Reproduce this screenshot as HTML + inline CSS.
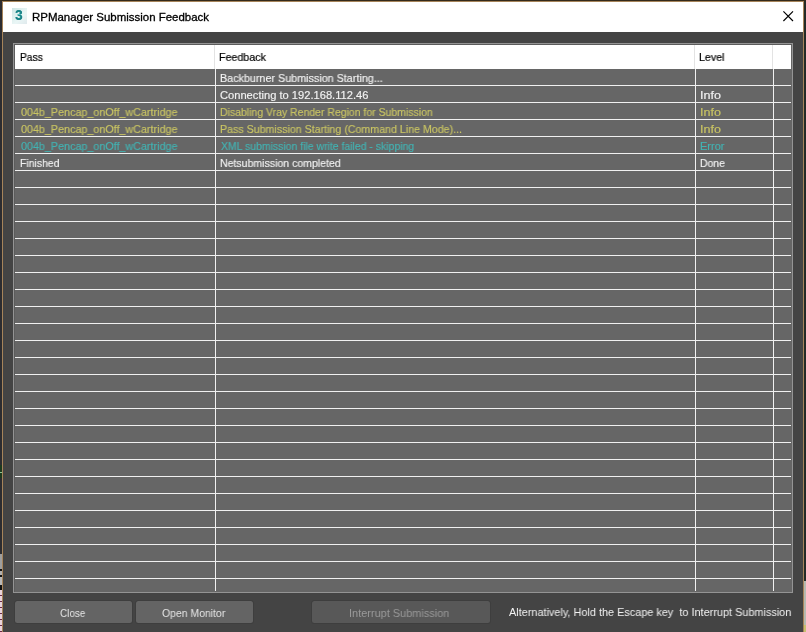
<!DOCTYPE html>
<html><head><meta charset="utf-8"><style>
*{margin:0;padding:0;box-sizing:border-box}
html,body{width:806px;height:632px;overflow:hidden;background:#2c2c30;font-family:"Liberation Sans",sans-serif;font-size:11px}
.abs{position:absolute}
.t{position:absolute;white-space:pre;line-height:13px;height:13px;transform-origin:0 0;will-change:transform}
#frame{position:absolute;left:2px;top:1px;width:802px;height:640px;background:#a6845a}
#title{position:absolute;left:3px;top:2px;width:800px;height:30px;background:#fff}
#body{position:absolute;left:3px;top:32px;width:800px;height:600px;background:#444}
#tbl{position:absolute;left:13px;top:43px;width:780px;height:550px;background:#949494}
#inner{position:absolute;left:14px;top:44px;width:778px;height:548px;background:#5c5c5c}
#rows{position:absolute;left:15px;top:45px;width:777px;height:547px;background:#666;overflow:hidden}
#hdr{position:absolute;left:0;top:0;width:776px;height:24px;background:#fff}
.hl{position:absolute;left:0;width:776px;height:1px;background:#f0f0f0}
.vl{position:absolute;top:24px;width:1px;height:522px;background:#f0f0f0}
.hs{position:absolute;top:0;width:1px;height:24px;background:#e3e3e3}
.btn{position:absolute;top:601px;height:22px;background:#646464;border-radius:2.5px;box-shadow:0 0 0 1px #3e3e3e}
</style></head><body>
<div id="frame"></div>
<div class="abs" style="left:0;top:465px;width:2px;height:13px;background:#1c3a1e"></div>
<div class="abs" style="left:0;top:472px;width:2px;height:1px;background:#8fc490"></div>
<div class="abs" style="left:0;top:554px;width:2px;height:15px;background:#9e9e9e"></div>
<div class="abs" style="left:0;top:569px;width:2px;height:2px;background:#111"></div>
<div class="abs" style="left:0;top:571px;width:2px;height:4px;background:#b0b0b0"></div>
<div class="abs" style="left:0;top:575px;width:2px;height:2px;background:#111"></div>
<div class="abs" style="left:0;top:577px;width:2px;height:8px;background:#b8b8b8"></div>
<div class="abs" style="left:0;top:585px;width:2px;height:5px;background:#111"></div>
<div class="abs" style="left:0;top:590px;width:2px;height:42px;background:repeating-linear-gradient(#e9d3dc 0 5px,#6a2a48 5px 6px)"></div>
<div class="abs" style="left:804px;top:1px;width:2px;height:580px;background:#232a26"></div>
<div class="abs" style="left:804px;top:581px;width:2px;height:44px;background:#b6bab0"></div>
<div class="abs" style="left:804px;top:625px;width:2px;height:7px;background:#c8c070"></div>

<div class="abs" style="left:0;top:0;width:806px;height:1px;background:#33291a"></div>
<div id="title"></div>
<div id="body"></div>
<div id="tbl"></div>
<div id="inner"></div>
<div id="rows">
<div id="hdr"><div class="hs" style="left:199px"></div><div class="hs" style="left:679px"></div><div class="hs" style="left:757px"></div></div>
<div class="hl" style="top:40px"></div><div class="hl" style="top:57px"></div><div class="hl" style="top:74px"></div><div class="hl" style="top:91px"></div><div class="hl" style="top:108px"></div><div class="hl" style="top:125px"></div><div class="hl" style="top:142px"></div><div class="hl" style="top:159px"></div><div class="hl" style="top:176px"></div><div class="hl" style="top:193px"></div><div class="hl" style="top:210px"></div><div class="hl" style="top:227px"></div><div class="hl" style="top:244px"></div><div class="hl" style="top:261px"></div><div class="hl" style="top:278px"></div><div class="hl" style="top:295px"></div><div class="hl" style="top:312px"></div><div class="hl" style="top:329px"></div><div class="hl" style="top:346px"></div><div class="hl" style="top:363px"></div><div class="hl" style="top:380px"></div><div class="hl" style="top:397px"></div><div class="hl" style="top:414px"></div><div class="hl" style="top:431px"></div><div class="hl" style="top:448px"></div><div class="hl" style="top:465px"></div><div class="hl" style="top:482px"></div><div class="hl" style="top:499px"></div><div class="hl" style="top:516px"></div><div class="hl" style="top:533px"></div><div class="vl" style="left:200px"></div><div class="vl" style="left:680px"></div><div class="vl" style="left:758px"></div>
</div>
<div class="btn" style="left:15px;width:117px"></div>
<div class="btn" style="left:136px;width:117px"></div>
<div class="btn" style="left:312px;width:178px;background:#585858"></div>
<div class="t" id="t0" style="left:32.20px;top:11px;color:#000;font-size:11px;transform:scaleX(1.0415);-webkit-text-stroke:0.3px #000;">RPManager Submission Feedback</div><div class="t" id="t1" style="left:20.20px;top:51px;color:#000;font-size:11px;transform:scaleX(0.9321);-webkit-text-stroke:0.2px #000;">Pass</div><div class="t" id="t2" style="left:219.42px;top:51px;color:#000;font-size:11px;transform:scaleX(0.9715);-webkit-text-stroke:0.2px #000;">Feedback</div><div class="t" id="t3" style="left:699.42px;top:51px;color:#000;font-size:11px;transform:scaleX(0.9702);-webkit-text-stroke:0.2px #000;">Level</div><div class="t" id="t4" style="left:220.20px;top:72px;color:#f2f2f2;font-size:11px;transform:scaleX(0.9782);-webkit-text-stroke:0.15px #f2f2f2;">Backburner Submission Starting...</div><div class="t" id="t5" style="left:220.20px;top:89px;color:#f2f2f2;font-size:11px;transform:scaleX(1.0124);-webkit-text-stroke:0.15px #f2f2f2;">Connecting to 192.168.112.46</div><div class="t" id="t6" style="left:700.20px;top:89px;color:#f2f2f2;font-size:11px;transform:scaleX(1.1437);-webkit-text-stroke:0.15px #f2f2f2;">Info</div><div class="t" id="t7" style="left:21.00px;top:106px;color:#cac563;font-size:11px;transform:scaleX(0.9775);-webkit-text-stroke:0.15px #cac563;">004b_Pencap_onOff_wCartridge</div><div class="t" id="t8" style="left:220.20px;top:106px;color:#cac563;font-size:11px;transform:scaleX(0.9523);-webkit-text-stroke:0.15px #cac563;">Disabling Vray Render Region for Submission</div><div class="t" id="t9" style="left:700.20px;top:106px;color:#cac563;font-size:11px;transform:scaleX(1.1437);-webkit-text-stroke:0.15px #cac563;">Info</div><div class="t" id="t10" style="left:21.00px;top:123px;color:#cac563;font-size:11px;transform:scaleX(0.9775);-webkit-text-stroke:0.15px #cac563;">004b_Pencap_onOff_wCartridge</div><div class="t" id="t11" style="left:220.20px;top:123px;color:#cac563;font-size:11px;transform:scaleX(0.9678);-webkit-text-stroke:0.15px #cac563;">Pass Submission Starting (Command Line Mode)...</div><div class="t" id="t12" style="left:700.20px;top:123px;color:#cac563;font-size:11px;transform:scaleX(1.1437);-webkit-text-stroke:0.15px #cac563;">Info</div><div class="t" id="t13" style="left:21.00px;top:140px;color:#42b4b4;font-size:11px;transform:scaleX(0.9775);-webkit-text-stroke:0.15px #42b4b4;">004b_Pencap_onOff_wCartridge</div><div class="t" id="t14" style="left:221.00px;top:140px;color:#42b4b4;font-size:11px;transform:scaleX(0.9507);-webkit-text-stroke:0.15px #42b4b4;">XML submission file write failed - skipping</div><div class="t" id="t15" style="left:700.20px;top:140px;color:#42b4b4;font-size:11px;transform:scaleX(0.9941);-webkit-text-stroke:0.15px #42b4b4;">Error</div><div class="t" id="t16" style="left:20.20px;top:157px;color:#f2f2f2;font-size:11px;transform:scaleX(0.9500);-webkit-text-stroke:0.15px #f2f2f2;">Finished</div><div class="t" id="t17" style="left:220.20px;top:157px;color:#f2f2f2;font-size:11px;transform:scaleX(0.9581);-webkit-text-stroke:0.15px #f2f2f2;">Netsubmission completed</div><div class="t" id="t18" style="left:700.20px;top:157px;color:#f2f2f2;font-size:11px;transform:scaleX(0.9454);-webkit-text-stroke:0.15px #f2f2f2;">Done</div><div class="t" id="t19" style="left:59.74px;top:607px;color:#e6e6e6;font-size:11px;transform:scaleX(0.9006);">Close</div><div class="t" id="t20" style="left:161.74px;top:607px;color:#e6e6e6;font-size:11px;transform:scaleX(0.9490);">Open Monitor</div><div class="t" id="t21" style="left:349.42px;top:607px;color:#9a9a9a;font-size:11px;transform:scaleX(0.9941);">Interrupt Submission</div><div class="t" id="t22" style="left:509.00px;top:606px;color:#f2f2f2;font-size:11px;transform:scaleX(0.9895);">Alternatively, Hold the Escape key  to Interrupt Submission</div>
<div class="abs" style="left:12px;top:8px;width:15px;height:16px;background:linear-gradient(135deg,#cfe6e4,#eaf6f6 60%,#dfe9ec)"></div>
<div class="abs" style="left:15.4px;top:5.8px;font:bold 15.5px/17px 'Liberation Sans',sans-serif;color:#1a8488;transform:scale(0.86,1.0);text-shadow:0.3px 0 0 #1a8488;transform-origin:0 0;will-change:transform">3</div>
<div class="abs" style="left:18px;top:14px;width:3px;height:1px;background:#5fd0cc;opacity:.8"></div>
<svg class="abs" style="left:783px;top:11px" width="11" height="11" viewBox="0 0 11 11"><path d="M0.4 0.4L10 10M10 0.4L0.4 10" stroke="#000" stroke-width="1.15"/></svg>
</body></html>
